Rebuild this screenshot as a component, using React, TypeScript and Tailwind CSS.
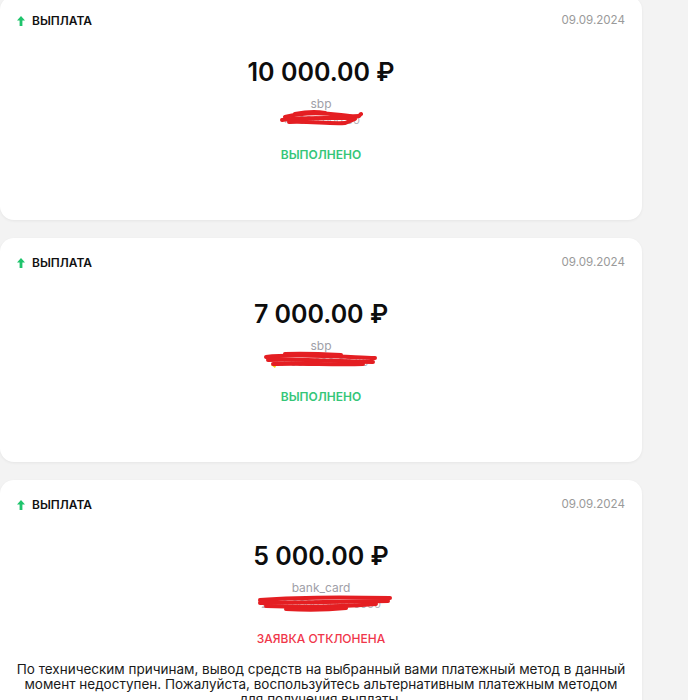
import React from 'react';

type Payout = {
  amount: string;
  date: string;
  method: string;
  phone: string;
  status: 'done' | 'rejected';
  scribble: 'a' | 'b' | 'c';
  note?: string;
};

const payouts: Payout[] = [
  { amount: '10 000.00 ₽', date: '09.09.2024', method: 'sbp', phone: '+7 900 000 00', status: 'done', scribble: 'a' },
  { amount: '7 000.00 ₽', date: '09.09.2024', method: 'sbp', phone: '+7 900 000 00 00', status: 'done', scribble: 'b' },
  {
    amount: '5 000.00 ₽',
    date: '09.09.2024',
    method: 'bank_card',
    phone: '2200 0000 0000 0000',
    status: 'rejected',
    scribble: 'c',
    note:
      'По техническим причинам, вывод средств на выбранный вами платежный метод в данный момент недоступен. Пожалуйста, воспользуйтесь альтернативным платежным методом для получения выплаты.',
  },
];

const ArrowUp = () => (
  <svg width="8" height="10" viewBox="0 0 8 10" className="shrink-0">
    <path d="M4 0 L8 4.6 H5.4 V10 H2.6 V4.6 H0 Z" fill="#1fc46c" />
  </svg>
);

// red marker strokes hiding the account details
const Scribble = ({ kind }: { kind: Payout['scribble'] }) => {
  if (kind === 'a') {
    return (
      <svg width="86" height="18" viewBox="0 0 86 18" className="absolute left-1/2 top-[-3px] -translate-x-[42px]">
        <g stroke="#e41e22" strokeWidth="4" strokeLinecap="round" fill="none">
          <path d="M6 8 C20 4 40 3 62 6 S80 6 82 5" />
          <path d="M3 11 C20 8 45 9 70 9 L80 7" />
          <path d="M10 13 C30 12 50 15 66 14 L76 10" />
          <path d="M16 5 C26 3 36 2 46 4" />
        </g>
      </svg>
    );
  }
  if (kind === 'b') {
    return (
      <svg width="118" height="20" viewBox="0 0 118 20" className="absolute left-1/2 top-[-4px] -translate-x-[58px]">
        <path d="M8 15 L12 18 L14 14 Z" fill="#f5d400" />
        <g stroke="#e41e22" strokeWidth="4" strokeLinecap="round" fill="none">
          <path d="M3 7 C25 4 60 6 112 8" />
          <path d="M5 10 C35 9 70 11 110 12" />
          <path d="M10 14 C40 13 70 15 100 14" />
          <path d="M22 4 C40 3 60 4 78 5" />
        </g>
      </svg>
    );
  }
  return (
    <svg width="138" height="18" viewBox="0 0 138 18" className="absolute left-1/2 top-[-2px] -translate-x-[65px]">
      <g stroke="#e41e22" strokeWidth="4" strokeLinecap="round" fill="none">
        <path d="M4 6 C40 3 90 3 134 4" />
        <path d="M4 9 C40 8 90 8 132 7" />
        <path d="M10 12 C40 13 80 13 120 10" />
        <path d="M30 15 C50 16 70 16 90 14" />
      </g>
    </svg>
  );
};

const PayoutCard = ({ p }: { p: Payout }) => (
  <div className="bg-white rounded-[14px] shadow-[0_1px_3px_rgba(0,0,0,0.06)] px-[17px] pt-4 pb-4 min-h-[224px]">
    <div className="flex items-center justify-between h-[18px]">
      <div className="flex items-center gap-[7px]">
        <ArrowUp />
        <span className="text-[12px] font-semibold text-[#111]">ВЫПЛАТА</span>
      </div>
      <span className="text-[11.6px] text-[#9a9a9a]">{p.date}</span>
    </div>

    <div className="flex flex-col items-center">
      <div className="mt-[26px] text-[25px] leading-8 font-semibold text-[#0d0d0d]">{p.amount}</div>
      <div className="mt-2 text-[12px] leading-4 text-[#a0a0a8]">{p.method}</div>
      <div className="relative h-4 w-full flex justify-center">
        <span className="text-[11px] leading-4 text-[#b4b4ba]">{p.phone}</span>
        <Scribble kind={p.scribble} />
      </div>
      <div
        className={
          p.status === 'done'
            ? 'mt-[19px] text-[12px] leading-4 font-semibold text-[#35c678]'
            : 'mt-[19px] text-[12px] leading-4 font-medium text-[#f0364a]'
        }
      >
        {p.status === 'done' ? 'ВЫПОЛНЕНО' : 'ЗАЯВКА ОТКЛОНЕНА'}
      </div>
      {p.note && (
        <p className="mt-[15px] -mx-[6px] text-[13.5px] leading-[15px] text-[#1a1a1a] text-center">{p.note}</p>
      )}
    </div>
  </div>
);

export default function App() {
  return (
    <div className="min-h-screen bg-[#f3f3f3] pr-[46px] overflow-hidden" style={{ fontFamily: 'Inter, "Noto Sans", sans-serif' }}>
      <div className="-mt-[4px] flex flex-col gap-[18px]">
        {payouts.map((p, i) => (
          <PayoutCard key={i} p={p} />
        ))}
      </div>
    </div>
  );
}
